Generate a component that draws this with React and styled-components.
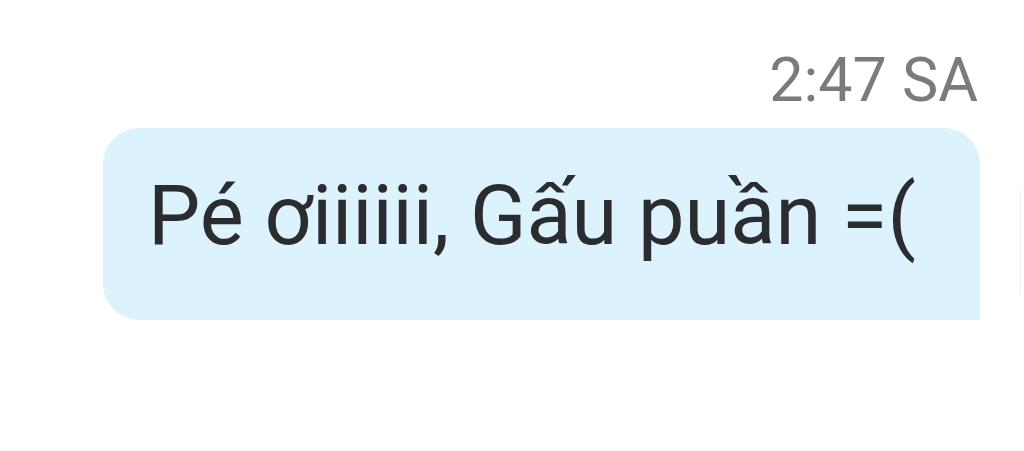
import React from 'react';
import styled, { createGlobalStyle } from 'styled-components';

const GlobalStyle = createGlobalStyle`
  html, body {
    margin: 0;
    padding: 0;
    background: #ffffff;
  }
  body {
    font-family: Roboto, "Noto Sans", sans-serif;
  }
`;

const Screen = styled.div`
  width: 1024px;
  height: 451px;
  box-sizing: border-box;
  display: flex;
  flex-direction: column;
  align-items: flex-end;
  padding: 44px 44px 0 103px;
  position: relative;
  overflow: hidden;
  background: #ffffff;
`;

const Time = styled.div`
  font-size: 61px;
  line-height: 72px;
  color: #7b7b7d;
  margin-right: 2px;
  margin-bottom: 12px;
`;

const Bubble = styled.div`
  align-self: stretch;
  height: 192px;
  box-sizing: border-box;
  display: flex;
  align-items: center;
  padding: 0 40px 18px 45px;
  background: #dcf2fd;
  border-radius: 36px 36px 0 36px;
  font-size: 83px;
  color: #2a2c2f;
  white-space: nowrap;
`;

const EdgeLine = styled.div`
  position: absolute;
  right: 3px;
  top: 190px;
  width: 1px;
  height: 105px;
  background: #efefef;
`;

export default function App() {
  return (
    <>
      <GlobalStyle />
      <Screen>
        <Time>2:47 SA</Time>
        <Bubble>Pé ơiiiiii, Gấu puần =(</Bubble>
        <EdgeLine />
      </Screen>
    </>
  );
}
